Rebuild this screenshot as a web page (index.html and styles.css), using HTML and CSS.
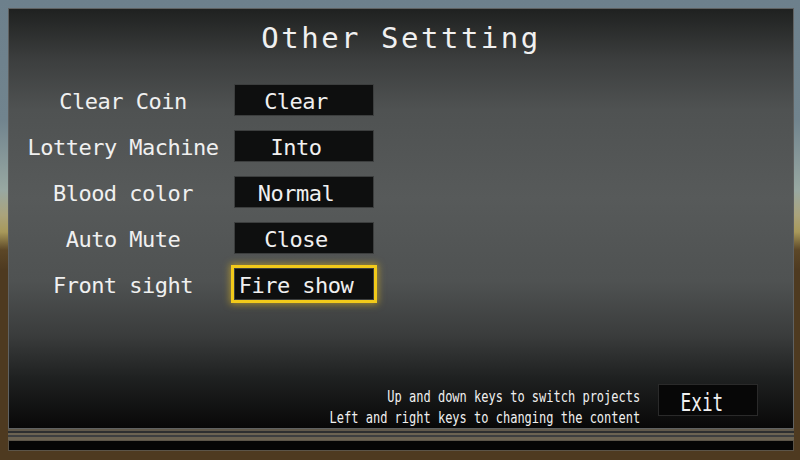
FILE: index.html
```html
<!DOCTYPE html>
<html lang="en">
<head>
    <meta charset="UTF-8">
    <meta name="viewport" content="width=device-width, initial-scale=1.0">
    <title>Other Settting</title>
    <link rel="stylesheet" href="styles.css">
</head>
<body>
    <div class="screen">
        <div class="panel">
            <h1 class="title">Other Settting</h1>

            <div class="options">
                <div class="option">
                    <span class="option-label">Clear Coin</span>
                    <span class="option-value">Clear</span>
                </div>
                <div class="option">
                    <span class="option-label">Lottery Machine</span>
                    <span class="option-value">Into</span>
                </div>
                <div class="option">
                    <span class="option-label">Blood color</span>
                    <span class="option-value">Normal</span>
                </div>
                <div class="option">
                    <span class="option-label">Auto Mute</span>
                    <span class="option-value">Close</span>
                </div>
                <div class="option">
                    <span class="option-label">Front sight</span>
                    <span class="option-value selected">Fire show</span>
                </div>
            </div>

            <div class="footer">
                <div class="hints">
                    <p>Up and down keys to switch projects</p>
                    <p>Left and right keys to changing the content</p>
                </div>
                <div class="exit-btn"><span>Exit</span></div>
            </div>
        </div>

        <div class="rails">
            <div class="rail rail-1"></div>
            <div class="rail rail-2"></div>
            <div class="rail rail-3"></div>
            <div class="rail rail-4"></div>
            <div class="rail rail-5"></div>
            <div class="rail-bar"></div>
        </div>
    </div>
</body>
</html>
```

FILE: styles.css
```css
body {
    margin: 0;
    width: 800px;
    height: 460px;
    overflow: hidden;
    font-family: "DejaVu Sans Mono", "Liberation Mono", monospace;
    color: #f0f0f0;
    background: linear-gradient(to bottom,
        #6d808c 0px,
        #71848e 120px,
        #98a8a2 190px,
        #aaa37c 215px,
        #a8995a 232px,
        #5c4727 250px,
        #4e3a20 270px,
        #4e3a20 100%);
}
.screen {
    padding: 8px 6px 0 8px;
}
.panel {
    height: 421px;
    box-sizing: border-box;
    border: 1px solid #5f6161;
    display: flex;
    flex-direction: column;
    background: linear-gradient(to bottom,
        #1f2120 0%,
        #3c3e3e 12%,
        #4f5252 24%,
        #575a5a 45%,
        #4f5252 65%,
        #3a3c3c 78%,
        #1f2121 88%,
        #080808 100%);
}
.title {
    margin: 0;
    padding-top: 9px;
    font-size: 29px;
    font-weight: normal;
    line-height: 40px;
    letter-spacing: 2.5px;
    text-align: center;
}
.options {
    margin-top: 26px;
    padding-left: 3px;
    display: flex;
    flex-direction: column;
    gap: 14px;
}
.option {
    display: grid;
    grid-template-columns: 222px 140px;
    align-items: center;
    height: 32px;
    font-size: 22px;
    letter-spacing: -0.5px;
}
.option-label {
    padding-top: 2px;
    text-align: center;
}
.option-value {
    height: 32px;
    box-sizing: border-box;
    padding: 3px 16px 0 0;
    line-height: 27px;
    text-align: center;
    white-space: pre;
    background-color: #0e0f0f;
    border: 1px solid #3c3e3e;
}
.selected {
    outline: 3px solid #f2ca1a;
    box-shadow: 0 0 7px 4px rgba(255, 205, 20, 0.5);
}
.footer {
    margin-top: auto;
    padding-right: 35px;
    display: flex;
    justify-content: flex-end;
    align-items: flex-end;
    gap: 18px;
}
.hints {
    text-align: right;
    font-size: 16px;
    line-height: 21px;
    transform: scaleX(0.75);
    transform-origin: right;
}
.hints p {
    margin: 0;
    white-space: nowrap;
}
.exit-btn {
    width: 100px;
    height: 32px;
    box-sizing: border-box;
    margin-bottom: 12px;
    padding: 5px 13px 0 0;
    text-align: center;
    font-size: 24px;
    line-height: 26px;
    background-color: #070707;
    border: 1px solid #2a2a2a;
}
.exit-btn span {
    display: inline-block;
    transform: scaleX(0.74);
}
.rails {
    display: flex;
    flex-direction: column;
}
.rail {
    height: 2px;
}
.rail-1 { background-color: #60594b; }
.rail-2 { background-color: #2d2f30; }
.rail-3 { background-color: #6b6352; }
.rail-4 { background-color: #3d3f40; }
.rail-5 {
    height: 3px;
    background-color: #6b6352;
}
.rail-bar {
    height: 11px;
    box-sizing: border-box;
    background-color: #050505;
    border: 1px solid #5b5448;
}
```
